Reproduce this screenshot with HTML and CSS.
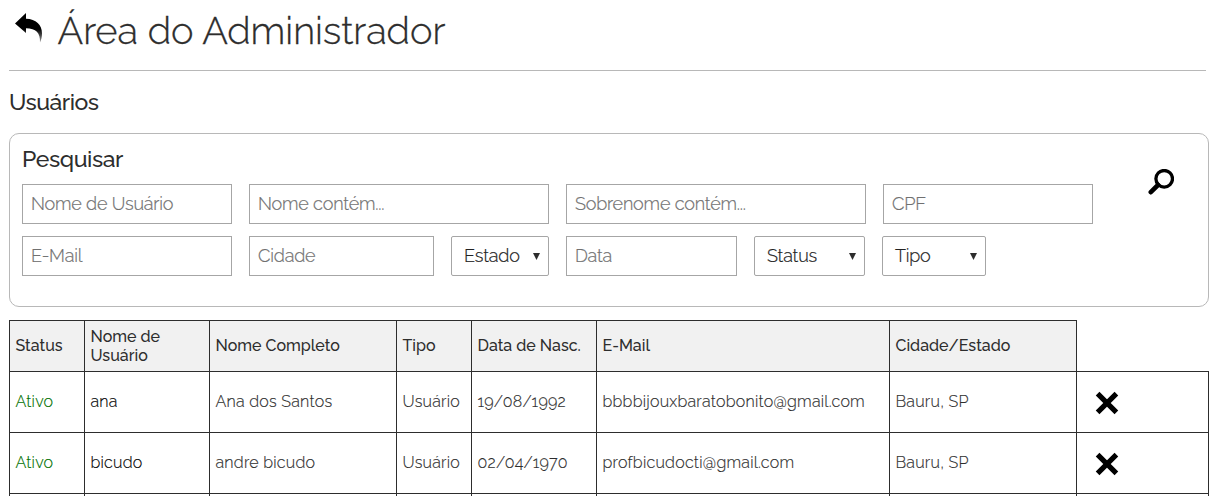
FILE: index.html
```
<!DOCTYPE html>
<html lang="pt-BR">
<head>
<meta charset="utf-8">
<title>Área do Administrador</title>
<link rel="stylesheet" href="styles.css">
</head>
<body>
<header class="header">
  <svg class="back" viewBox="0 0 30 32"><defs><linearGradient id="tail" x1="0" y1="0" x2="0" y2="1"><stop offset=".55" stop-color="#000"/><stop offset="1" stop-color="#000" stop-opacity=".4"/></linearGradient></defs><path fill="url(#tail)" d="M1 11.500 12 1v5.700C22 7 28 12.500 28 21.500c0 3.500-.8 6.500-2 9C26.500 21 22 16.500 12 16.300V21z"/></svg>
  <h1 class="title">Área do Administrador</h1>
</header>
<h2 class="heading">Usuários</h2>
<section class="panel">
  <div class="search">
    <h2 class="heading heading-search">Pesquisar</h2>
    <div class="fields">
      <input class="field w210" placeholder="Nome de Usuário">
      <input class="field w300" placeholder="Nome contém...">
      <input class="field w300" placeholder="Sobrenome contém...">
      <input class="field w210" placeholder="CPF">
    </div>
    <div class="fields">
      <input class="field w210" placeholder="E-Mail">
      <input class="field w185" placeholder="Cidade">
      <div class="select w98"><span>Estado</span><svg class="arrow" viewBox="0 0 7 7"><path d="M0 0h7L3.500 7z"/></svg></div>
      <input class="field w171" placeholder="Data">
      <div class="select w111"><span>Status</span><svg class="arrow" viewBox="0 0 7 7"><path d="M0 0h7L3.500 7z"/></svg></div>
      <div class="select w104"><span>Tipo</span><svg class="arrow" viewBox="0 0 7 7"><path d="M0 0h7L3.500 7z"/></svg></div>
    </div>
  </div>
  <svg class="lens" viewBox="0 0 26 26"><circle cx="16.200" cy="9.800" r="8.300"/><path d="M10 16 2.800 23.200"/></svg>
</section>
<table class="users">
  <colgroup><col class="c1"><col class="c2"><col class="c3"><col class="c4"><col class="c5"><col class="c6"><col class="c7"><col class="c8"></colgroup>
  <thead>
    <tr><th>Status</th><th>Nome de<br>Usuário</th><th>Nome Completo</th><th>Tipo</th><th>Data de Nasc.</th><th>E-Mail</th><th>Cidade/Estado</th><td class="blank"></td></tr>
  </thead>
  <tbody>
    <tr><td class="active">Ativo</td><td class="login">ana</td><td>Ana dos Santos</td><td>Usuário</td><td>19/08/1992</td><td>bbbbijouxbaratobonito@gmail.com</td><td>Bauru, SP</td><td class="action"><svg class="remove" viewBox="0 0 24 24"><path d="M2.600 2.600l18.800 18.800M21.400 2.600 2.600 21.400"/></svg></td></tr>
    <tr><td class="active">Ativo</td><td class="login">bicudo</td><td>andre bicudo</td><td>Usuário</td><td>02/04/1970</td><td>profbicudocti@gmail.com</td><td>Bauru, SP</td><td class="action"><svg class="remove" viewBox="0 0 24 24"><path d="M2.600 2.600l18.800 18.800M21.400 2.600 2.600 21.400"/></svg></td></tr>
    <tr class="next"><td></td><td></td><td></td><td></td><td></td><td></td><td></td><td></td></tr>
  </tbody>
</table>
</body>
</html>
```
FILE: styles.css
```
* { box-sizing: border-box; }
body { margin: 0; padding: 0 8px 0 9px; background: #fff; color: #2d2d2d; font-family: Raleway, Lato, sans-serif; font-weight: 300; }
h1, h2 { margin: 0; }
.header { display: flex; height: 71px; width: 1197px; border-bottom: 1px solid #b8b8b8; padding: 0 0 0 5px; }
.back { width: 30px; height: 32px; margin: 12px 14px 0 0; }
.title { font-size: 38px; font-weight: 300; line-height: 62px; margin-left: -0.5px; white-space: nowrap; -webkit-text-stroke: 0.3px; }
.heading { font-size: 23px; font-weight: 500; line-height: 28px; margin: 17px 0; letter-spacing: -0.5px; }
.panel { display: flex; justify-content: space-between; width: 1200px; height: 174px; border: 1px solid #b8b8b8; border-radius: 10px; padding: 11px 34px 0 12px; }
.heading-search { margin: 0 0 11px; letter-spacing: -0.4px; }
.fields { display: flex; gap: 17px; margin-bottom: 12px; }
.field, .select { height: 40px; border: 1px solid #a6a6a6; background: #fff; font-family: inherit; font-weight: 300; font-size: 18px; letter-spacing: -0.18px; border-radius: 0; -webkit-text-stroke: 0.2px; }
.field { padding: 0 8px 2px; }
.field::placeholder { color: #707070; opacity: 1; }
.select { display: flex; align-items: center; justify-content: space-between; padding: 0 8px 0 12px; border-radius: 2px; color: #222; }
.select span { padding-bottom: 2px; }
.arrow { width: 7px; height: 7px; fill: #2d2d2d; }
.w210 { width: 210px; } .w300 { width: 300px; } .w185 { width: 185px; } .w98 { width: 98px; }
.w171 { width: 171px; } .w111 { width: 111px; } .w104 { width: 104px; }
.lens { width: 26px; height: 26px; margin-top: 24px; fill: none; stroke: #000; stroke-width: 3.300; stroke-linecap: round; }
.lens path { stroke-width: 4.600; }
.users { width: 1200px; margin-top: 13px; table-layout: fixed; border-collapse: collapse; font-size: 16px; line-height: 19px; }
.users th, .users td { border: 1px solid #2d2d2d; padding: 0 0 2px 5.5px; text-align: left; white-space: nowrap; }
.users th { height: 51px; padding-bottom: 1px; background: #f1f1f1; font-weight: 500; }
.users td { height: 61px; font-weight: 300; letter-spacing: 0.25px; -webkit-text-stroke: 0.15px; }
.users .blank { border-top: none; border-right: none; height: 51px; }
.users .active { color: #007000; }
.users .login { color: #000; }
.users .action { padding: 1px 0 0 18px; }
.users .next td { height: 3px; padding: 0; border-bottom: none; }
.remove { display: block; width: 24px; height: 24px; stroke: #000; stroke-width: 5.200; stroke-linecap: butt; }
.c1, .c4 { width: 75px; } .c2, .c5 { width: 125px; } .c3, .c7 { width: 187px; } .c6 { width: 293px; } .c8 { width: 132px; }
```
